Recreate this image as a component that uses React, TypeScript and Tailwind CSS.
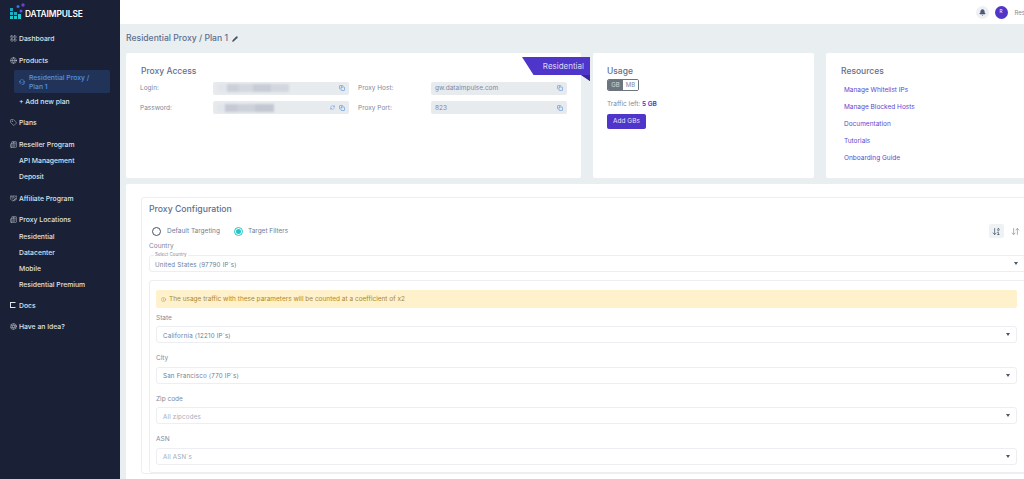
import { ReactNode } from 'react';
import {
  LayoutGrid,
  Globe,
  Headset,
  Tag,
  Newspaper,
  Handshake,
  Aperture,
  Copy,
  RefreshCw,
  Bell,
  Pencil,
  Info,
  ArrowDownUp,
  ArrowDown01,
} from 'lucide-react';

const Logo = () => (
  <svg width="16" height="20" viewBox="0 0 16 20" className="shrink-0">
    <rect x="1" y="8" width="3" height="3" fill="#1f9fc4" />
    <rect x="1" y="12" width="3" height="3" fill="#1fb0c4" />
    <rect x="1" y="16" width="3" height="3" fill="#22c3c9" />
    <rect x="5" y="12" width="3" height="3" fill="#1fa7c4" />
    <rect x="5" y="16" width="3" height="3" fill="#22c3c9" />
    <rect x="9" y="14" width="3" height="5" fill="#22c3c9" />
    <circle cx="9" cy="6.500" r="1.500" fill="#3f6fd8" />
    <circle cx="14" cy="5" r="1.700" fill="#6a3fd8" />
    <circle cx="12" cy="11" r="1.500" fill="#5a55e0" />
  </svg>
);

const SideItem = ({ icon, label, className = '' }: { icon: ReactNode; label: string; className?: string }) => (
  <div className={`flex h-[16px] items-center gap-[2px] pl-[9px] text-[6.800px] font-medium text-[#dfe3ea] ${className}`}>
    <span className="flex w-[8px] justify-center">{icon}</span>
    <span className="pt-[2px]">{label}</span>
  </div>
);

const SubItem = ({ label }: { label: string }) => (
  <div className="flex h-[16px] items-center pl-[19px] pt-[2px] text-[6.800px] font-medium text-[#dfe3ea]">{label}</div>
);

const Field = ({ children, refresh = false }: { children: ReactNode; refresh?: boolean }) => (
  <div className="flex h-[13px] w-[136px] items-center justify-between rounded-[2px] bg-[#e8ebee] px-[4px] text-[6.500px] text-[#7d8aa0]">
    <div className="flex min-w-0 items-center pt-[2px]">{children}</div>
    <div className="flex items-center gap-[4px] text-[#5a93e0]">
      {refresh && <RefreshCw size={5} strokeWidth={2} />}
      <Copy size={6} strokeWidth={2.500} />
    </div>
  </div>
);

const Smudge = ({ blocks }: { blocks: [number, string][] }) => (
  <div className="mt-[-2px] flex h-[8px] blur-[1px]">
    {blocks.map(([w, color], i) => (
      <div key={i} className="h-full" style={{ width: w, background: color }} />
    ))}
  </div>
);

const Select = ({ value, muted = false, wide = false }: { value: string; muted?: boolean; wide?: boolean }) => (
  <div className={`flex h-[17px] items-center justify-between rounded-[3px] border border-[#eceef1] bg-white ${wide ? 'pl-[5px] pr-[10px]' : 'pl-[6px] pr-[6px]'}`}>
    <span className={`pt-[2px] text-[6.200px] tracking-[0.2px] ${muted ? 'text-[#a3abb8]' : 'text-[#6f7d94]'}`}>{value}</span>
    <span className="h-0 w-0 border-x-[2.500px] border-t-[3px] border-x-transparent border-t-[#4a5568]" />
  </div>
);

const FilterField = ({ label, value, muted }: { label: string; value: string; muted?: boolean }) => (
  <div className="flex flex-col">
    <div className="h-[13.500px] pt-[1px] text-[6.500px] leading-[9px] text-[#7d8aa0]">{label}</div>
    <Select value={value} muted={muted} />
  </div>
);

const links = ['Manage Whitelist IPs', 'Manage Blocked Hosts', 'Documentation', 'Tutorials', 'Onboarding Guide'];

export default function App() {
  return (
    <div className="flex h-[479px] w-[1024px] overflow-hidden bg-[#e9eef1] font-['Inter',sans-serif]">
      {/* Sidebar */}
      <aside className="flex w-[120px] shrink-0 flex-col bg-[#1a2035]">
        <div className="flex h-[30.500px] items-start pl-[9px]">
          <Logo />
          <span className="mt-[8px] text-[8.400px] font-semibold tracking-[-0.1px] text-white">DATAIMPULSE</span>
        </div>
        <SideItem icon={<LayoutGrid size={7} strokeWidth={1.5} />} label="Dashboard" />
        <SideItem className="mt-[5.500px]" icon={<Globe size={7} strokeWidth={1.5} />} label="Products" />
        <div className="ml-[14px] mt-[2px] flex h-[23px] w-[96px] items-center gap-[4px] rounded-[2px] bg-[#22335a] pl-[5px] text-[6.800px] font-medium leading-[8.500px] text-[#4f93e8]">
          <Headset size={6} className="shrink-0" />
          <span className="w-[70px] pt-[2px]">Residential Proxy / Plan 1</span>
        </div>
        <div className="flex h-[16px] items-center pl-[19px] pt-[2px] text-[6.800px] font-medium text-[#dfe3ea]">+ Add new plan</div>
        <SideItem className="mt-[5.500px]" icon={<Tag size={7} strokeWidth={1.5} />} label="Plans" />
        <SideItem className="mt-[5.500px]" icon={<Newspaper size={7} strokeWidth={1.5} />} label="Reseller Program" />
        <SubItem label="API Management" />
        <SubItem label="Deposit" />
        <SideItem className="mt-[6px]" icon={<Handshake size={7} strokeWidth={1.5} />} label="Affiliate Program" />
        <SideItem className="mt-[5.500px]" icon={<Newspaper size={7} strokeWidth={1.5} />} label="Proxy Locations" />
        <div className="h-[1px]" />
        <SubItem label="Residential" />
        <SubItem label="Datacenter" />
        <SubItem label="Mobile" />
        <SubItem label="Residential Premium" />
        <SideItem className="mt-[4.500px]" icon={<span className="block h-[6px] w-[6px] border border-[#dfe3ea] border-r-[#1a2035]" />} label="Docs" />
        <SideItem className="mt-[5.500px]" icon={<Aperture size={7} strokeWidth={1.5} />} label="Have an Idea?" />
      </aside>

      {/* Main */}
      <main className="flex min-w-0 flex-1 flex-col">
        <header className="flex h-[24px] shrink-0 items-center bg-white pl-[855.500px]">
          <div className="flex h-[13px] w-[13px] shrink-0 items-center justify-center rounded-full bg-[#eef0f3]">
            <Bell size={7} fill="#4a5a78" className="text-[#4a5a78]" />
          </div>
          <div className="ml-[6px] flex h-[13px] w-[13px] shrink-0 items-center justify-center rounded-full bg-[#4f35c9] text-[4.500px] text-white">R</div>
          <span className="ml-[7px] shrink-0 text-[6px] text-[#7d8aa0]">Res</span>
        </header>

        <div className="flex h-[29px] shrink-0 items-center gap-[3px] pl-[6px] text-[8.600px] font-medium text-[#5f6f8e]">
          Residential Proxy / Plan 1
          <Pencil size={6} fill="#4a5568" className="ml-[1px] text-[#4a5568]" />
        </div>

        <div className="flex h-[125px] shrink-0 gap-[12px] pl-[6px]">
          {/* Proxy Access */}
          <section className="relative w-[455px] shrink-0 rounded-[2px] bg-white pl-[14px] pt-[12.500px]">
            <h2 className="pl-[1px] text-[8.500px] font-medium leading-[11px] text-[#5f6f8e]">Proxy Access</h2>
            <div className="mt-[5px] grid grid-cols-[73px_136px_9px_73px_136px] grid-rows-[13px_13px] gap-y-[6.500px] text-[6.500px] text-[#7d8aa0]">
              <div className="flex items-center pt-[2px]">Login:</div>
              <Field>
                <Smudge blocks={[[10, '#e2e5ea'], [12, '#ccd0d9'], [14, '#d4d8df'], [18, '#c8ccd6'], [18, '#d4d7de']]} />
              </Field>
              <div />
              <div className="flex items-center pt-[2px]">Proxy Host:</div>
              <Field>gw.dataimpulse.com</Field>
              <div className="flex items-center pt-[2px]">Password:</div>
              <Field refresh>
                <Smudge blocks={[[8, '#e2e5ea'], [12, '#c6cad4'], [18, '#cdd1da'], [19, '#c3c7d2']]} />
              </Field>
              <div />
              <div className="flex items-center pt-[2px]">Proxy Port:</div>
              <Field>823</Field>
            </div>
            {/* Ribbon */}
            <div className="absolute right-[-9px] top-[4px] h-[24px] w-[68px] overflow-hidden bg-[#4f35c9] [clip-path:polygon(0_0,100%_0,100%_100%,87%_75%,17%_75%)]">
              <div className="absolute bottom-0 left-0 h-[6px] w-full bg-[#3a2599]" />
              <span className="absolute right-[6px] top-[4px] text-[8px] leading-[11px] text-[#dcd8f6]">Residential</span>
            </div>
          </section>

          {/* Usage */}
          <section className="w-[221px] shrink-0 rounded-[2px] bg-white pl-[14px] pt-[12.500px]">
            <h2 className="text-[8.500px] font-medium leading-[11px] text-[#5f6f8e]">Usage</h2>
            <div className="mt-[2.500px] flex h-[12px] w-[32px] overflow-hidden rounded-[2px] border border-[#6c757d] text-[6px] leading-none">
              <span className="flex flex-1 items-center justify-center bg-[#6c757d] text-[#d5d9de]">GB</span>
              <span className="flex flex-1 items-center justify-center bg-white text-[#7d8aa0]">MB</span>
            </div>
            <p className="mt-[8.500px] text-[6.500px] leading-[9px] text-[#7d8aa0]">
              Traffic left: <b className="font-semibold text-[#4f35c9]">5 GB</b>
            </p>
            <button className="mt-[5.500px] flex h-[15px] w-[39px] items-center justify-center rounded-[2px] bg-[#4f35c9] pt-[1px] text-[6.500px] text-[#e6e3fa]">Add GBs</button>
          </section>

          {/* Resources */}
          <section className="w-[210px] shrink-0 rounded-[2px] bg-white pl-[15px] pt-[12.500px]">
            <h2 className="text-[8.500px] font-medium leading-[11px] text-[#5f6f8e]">Resources</h2>
            <ul className="mt-[5px] flex flex-col pl-[3px] text-[6.500px] text-[#5b49d0]">
              {links.map((link) => (
                <li key={link} className="flex h-[17px] items-center pt-[2px]">
                  {link}
                </li>
              ))}
            </ul>
          </section>
        </div>

        {/* Proxy Configuration */}
        <div className="ml-[6px] mt-[6px] min-h-0 w-[910px] flex-1 shrink-0 rounded-t-[2px] bg-white pl-[15px] pt-[13px]">
          <div className="w-[896px] rounded-[3px] border border-[#eceef1] px-[7px] pt-[5px]">
            <h2 className="text-[8.700px] font-medium leading-[12px] text-[#5f6f8e]">Proxy Configuration</h2>

            <div className="mt-[9px] flex h-[14px] items-center pl-[3px] text-[6.500px] text-[#6f7d94]">
              <span className="h-[9px] w-[9px] rounded-full border border-[#4a5568]" />
              <span className="ml-[6px] pt-[2px]">Default Targeting</span>
              <span className="ml-[14px] flex h-[9px] w-[9px] items-center justify-center rounded-full border border-[#1fc7c7]">
                <span className="h-[5px] w-[5px] rounded-full bg-[#1fc7c7]" />
              </span>
              <span className="ml-[5px] pt-[2px]">Target Filters</span>
              <div className="ml-auto mr-[9px] flex items-center gap-[7px]">
                <span className="flex h-[14px] w-[15px] items-center justify-center rounded-[2px] bg-[#eef2f5] text-[#4a5568]">
                  <ArrowDown01 size={9} />
                </span>
                <span className="text-[#8a97ab]">
                  <ArrowDownUp size={9} />
                </span>
              </div>
            </div>

            <div className="mt-[3.500px] h-[9px] text-[6.500px] leading-[9px] text-[#7d8aa0]">Country</div>
            <div className="relative mt-[4.500px]">
              <Select value="United States (97790 IP´s)" wide />
              <span className="absolute left-[5px] top-[-3px] bg-white px-[1px] text-[4.500px] leading-[6px] text-[#7d8aa0]">Select Country</span>
            </div>

            <div className="mt-[8px] rounded-[3px] border border-[#eceef1] pb-[7px] pl-[6px] pr-[11px] pt-[9px]">
              <div className="mb-[4.500px] flex h-[18px] items-center gap-[3px] rounded-[2px] bg-[#fff1cc] pl-[5px] text-[6.500px] text-[#a88a2c]">
                <Info size={5} />
                <span className="pt-[2px]">The usage traffic with these parameters will be counted at a coefficient of x2</span>
              </div>
              <div className="flex flex-col gap-[10px]">
                <FilterField label="State" value="California (12210 IP´s)" />
                <FilterField label="City" value="San Francisco (770 IP´s)" />
                <FilterField label="Zip code" value="All zipcodes" muted />
                <FilterField label="ASN" value="All ASN´s" muted />
              </div>
            </div>
          </div>
        </div>
      </main>
    </div>
  );
}
